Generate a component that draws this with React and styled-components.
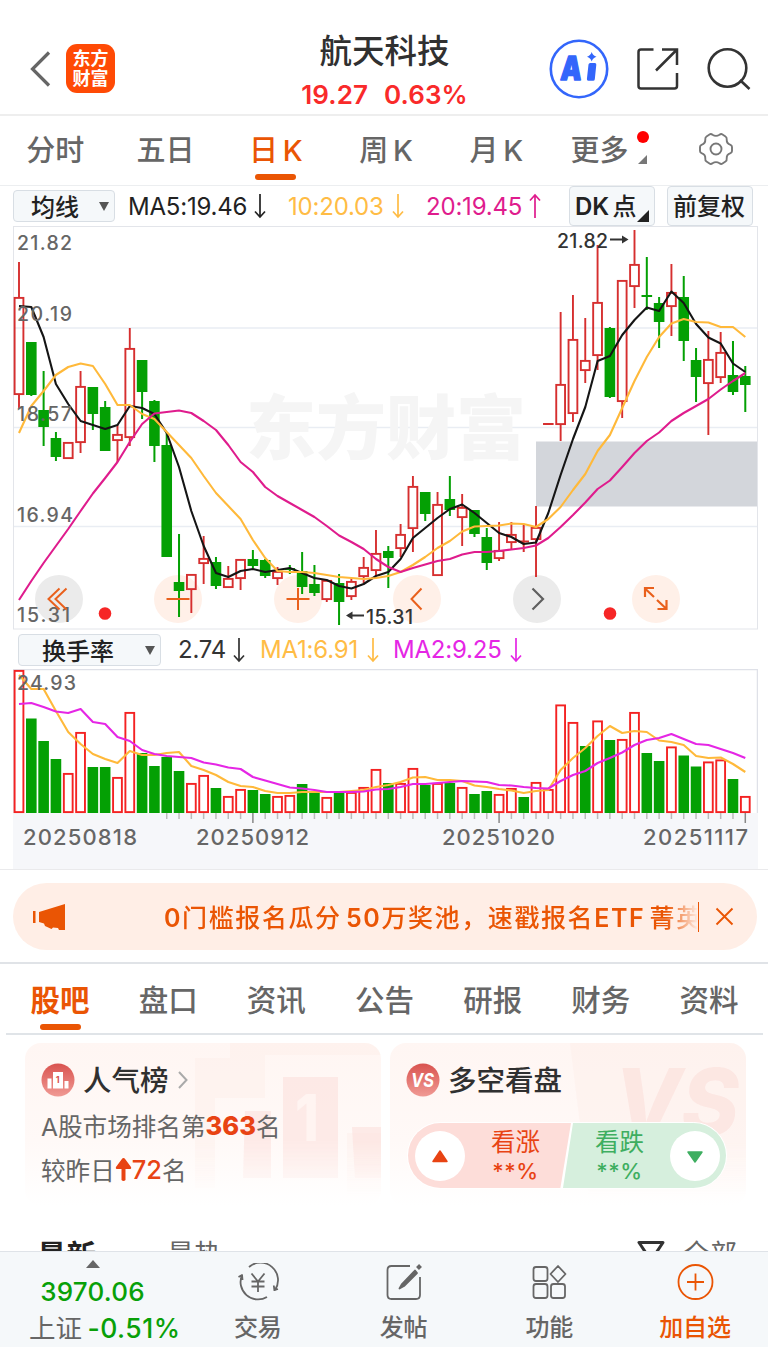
import styled, { createGlobalStyle } from "styled-components";

const UP = "#d62f2f";
const DOWN = "#04a004";
const STEP = 12.31;

// color, high, body top, body bottom, low
const candles = [
  ["r", 262, 297, 395, 408], ["g", 342, 342, 395, 396], ["g", 371, 410, 427, 446], ["g", 432, 438, 457, 461],
  ["r", 442, 442, 459, 459], ["r", 371, 386, 443, 453], ["g", 387, 387, 414, 430], ["g", 401, 407, 451, 451],
  ["r", 425, 434, 441, 462], ["r", 328, 348, 438, 446], ["g", 360, 360, 392, 419], ["g", 400, 401, 446, 462],
  ["g", 432, 445, 557, 557], ["g", 534, 582, 591, 617], ["r", 574, 574, 590, 613], ["r", 536, 558, 564, 584],
  ["g", 557, 562, 586, 589], ["r", 566, 578, 588, 588], ["r", 559, 559, 579, 590], ["g", 550, 559, 566, 568],
  ["g", 559, 560, 576, 578], ["r", 567, 571, 579, 585], ["g", 565, 568, 570, 574], ["g", 552, 571, 587, 594],
  ["g", 565, 584, 593, 596], ["r", 580, 580, 600, 602], ["g", 574, 583, 602, 625], ["r", 578, 581, 597, 600],
  ["r", 557, 567, 577, 583], ["r", 530, 553, 571, 576], ["g", 546, 551, 558, 588], ["r", 524, 534, 549, 557],
  ["r", 476, 486, 529, 552], ["g", 492, 492, 514, 521], ["r", 492, 504, 576, 576], ["g", 476, 499, 510, 516],
  ["r", 494, 507, 518, 546], ["g", 510, 510, 534, 537], ["g", 528, 537, 563, 570], ["r", 522, 550, 559, 561],
  ["r", 522, 534, 543, 549], ["r", 525, 541, 542, 552], ["r", 506, 527, 540, 577], ["r", 424, 424, 424, 424],
  ["r", 312, 384, 425, 441], ["r", 295, 339, 414, 422], ["r", 318, 360, 371, 383], ["r", 245, 302, 356, 370],
  ["g", 327, 328, 397, 398], ["r", 280, 280, 402, 418], ["r", 230, 264, 287, 308], ["g", 257, 295, 297, 310],
  ["g", 297, 303, 322, 348], ["r", 264, 292, 307, 336], ["g", 276, 297, 341, 361], ["g", 348, 360, 377, 402],
  ["r", 331, 359, 384, 435], ["r", 332, 352, 378, 383], ["g", 341, 375, 392, 395], ["g", 366, 376, 385, 412],
];

const ma5 = [306, 307, 337, 384, 404, 421, 425, 429, 425, 406, 408, 414, 433, 467, 511, 546, 573, 577, 571, 569, 572, 570, 568, 573, 578, 580, 586, 588.5, 584, 576, 572, 559, 538, 528, 518, 509, 504.5, 513, 523, 533, 537, 544, 542.5, 513, 475, 439, 407, 361, 356, 335, 320, 307.5, 311, 291.5, 303, 324, 337.5, 343.5, 363.5, 372];
const ma10 = [433, 406, 391, 375, 367, 363.5, 366, 384, 405, 405, 414, 419, 432, 445, 458, 476, 493, 506, 519, 540, 558, 571, 572, 572, 573, 575, 577, 578, 579, 578, 576, 572, 565, 557, 548, 541, 531.5, 526.5, 526, 525.5, 523.5, 524, 527, 519, 507, 490, 474, 451, 435, 408, 381, 357, 337, 323.5, 319, 322, 322.5, 327, 327, 337];
const ma20 = [600, 581, 563, 546, 529, 511, 493.5, 478, 462, 442, 424, 413.5, 412, 410.5, 413, 421, 430, 445, 462, 472, 487, 496, 503, 510, 517, 526, 535.5, 542, 549, 559, 567, 572, 568, 564.5, 561, 559, 554.5, 552, 552, 551, 549.5, 548, 545.5, 538, 527, 515, 502.5, 489, 480.5, 467, 453, 441, 432.5, 421, 413, 406, 399, 389.5, 381, 373];

const volColors = "rgggrrggrrggggrrgrrggrrggrgrrrgrrgrgrggrrgrrrrgrgrrggrggrrgr";
const volumes = [670, 718.5, 741, 759, 773, 732, 767, 767, 777, 712, 753, 766, 757, 771, 783, 775, 788, 796, 789, 790, 794, 796, 795, 784, 793, 797, 793, 792, 787, 769, 783, 783, 768, 785, 783, 783, 787, 794, 791, 794, 788, 797, 782, 789, 704.5, 722, 746, 720.5, 740, 739, 712, 753, 761, 746.5, 755.5, 766.5, 761.5, 759.5, 779, 796];
const vma1 = [675, 689, 689, 711, 732, 744, 754, 759, 763, 751, 755, 755, 753, 752, 766, 770, 775, 782, 786, 787, 791, 793, 793, 792, 792, 792, 792, 791, 790, 787, 785, 782, 777.5, 777, 780, 780, 781, 785.5, 787, 789, 790.5, 793, 791, 790, 770, 758, 748, 736, 726, 733, 731, 732, 740.5, 742, 745, 756, 758, 757.5, 764, 772];
const vma2 = [704, 703, 707, 711.5, 713, 709, 722, 724, 737, 741, 750, 754, 756, 757, 758, 762.5, 764.5, 767.5, 769, 777, 780.5, 784, 787.5, 788.5, 790, 792, 792, 792, 791.5, 789.5, 789, 787, 784, 784, 783, 782, 781, 781.5, 782, 785, 785.5, 787, 788, 788.5, 781, 775, 771, 763, 758, 752.5, 745, 740, 738, 734, 739, 744, 745, 749, 753, 758];

const xAt = (i) => 19 + i * STEP;
const toPoints = (values) => values.map((y, i) => `${xAt(i).toFixed(1)},${y}`).join(" ");
const isDateTick = (i) => [19, 39, 59].includes(i);

const MaLine = ({ values, color }) => (
  <polyline points={toPoints(values)} fill="none" stroke={color} strokeWidth="2.1" strokeLinejoin="round" />
);

const Candle = ({ i, data }) => {
  const [kind, high, top, bottom, low] = data;
  const x = xAt(i);
  if (bottom - top < 3) {
    const color = kind === "r" ? UP : DOWN;
    return (
      <g stroke={color} strokeWidth="2">
        <path d={`M${x} ${high}V${low}M${x - 5.3} ${(top + bottom) / 2}h10.6`} />
      </g>
    );
  }
  if (kind === "g") {
    return (
      <g fill={DOWN}>
        <rect x={x - 1} y={high} width="2" height={low - high} />
        <rect x={x - 5.3} y={top} width="10.6" height={bottom - top} />
      </g>
    );
  }
  return (
    <g stroke={UP} strokeWidth="1.9" fill="none">
      <path d={`M${x} ${high}V${top}M${x} ${bottom}V${low}`} />
      <rect x={x - 4.4} y={top + 0.9} width="8.8" height={bottom - top - 1.8} />
    </g>
  );
};

const PriceChart = () => (
  <Chart viewBox="13 226 745 404" width="745" height="404">
    <rect x="13.5" y="226.5" width="744" height="402.5" fill="#fff" stroke="#e3e5ea" />
    <path d="M14 328H757M14 427.5H757M14 526.5H757" stroke="#e9edf3" strokeWidth="1.3" />
    <Watermark x="246" y="454" textLength="280">东方财富</Watermark>
    <rect x="536" y="441.5" width="221" height="65" fill="#d3d6db" />
    <circle cx="59" cy="599" r="24" fill="#ebebeb" />
    <circle cx="178" cy="599" r="24" fill="#fff0e8" />
    <circle cx="298" cy="599" r="24" fill="#fff0e8" />
    <circle cx="417" cy="599" r="24" fill="#fff0e8" />
    <circle cx="537" cy="599" r="24" fill="#ebebeb" />
    <circle cx="656" cy="599" r="24" fill="#fff0e8" />
    {candles.map((c, i) => (
      <Candle key={i} i={i} data={c} />
    ))}
    <MaLine values={ma5} color="#151515" />
    <MaLine values={ma10} color="#ffb93a" />
    <MaLine values={ma20} color="#df1c8d" />
    <AxisText x="17" y="249.5" textLength="55">21.82</AxisText>
    <AxisText x="17" y="320.5" textLength="55">20.19</AxisText>
    <AxisText x="17" y="421" textLength="55">18.57</AxisText>
    <AxisText x="17" y="521.5" textLength="56">16.94</AxisText>
    <AxisText x="17" y="622" textLength="53">15.31</AxisText>
    <MarkText x="557" y="247.5" textLength="51">21.82</MarkText>
    <path d="M610 239.5h16" stroke="#333" strokeWidth="2" />
    <path d="M622 235.5l6.5 4-6.5 4z" fill="#333" />
    <MarkText x="366" y="623.5" textLength="47">15.31</MarkText>
    <path d="M348 615.5h16" stroke="#333" strokeWidth="2" />
    <path d="M352.5 611.5l-6.5 4 6.5 4z" fill="#333" />
    <g fill="none" stroke="#e9601c" strokeWidth="2">
      <path d="M59.5 588.5l-11 10.5 11 10.5M66.5 588.5l-11 10.5 11 10.5" />
      <path d="M166.5 599h23M286.5 599h23M298 588v22M421.5 588.5l-10 10.5 10 10.5" />
      <path d="M654 588h-9v9M645 588.5l9 8.5M657.5 609h9v-9M666 608.5l-9-8.5" strokeWidth="2.2" />
    </g>
    <path d="M532.5 588.5l10.500 10.5-10.500 10.5" fill="none" stroke="#606060" strokeWidth="2.2" />
    <circle cx="105" cy="613.5" r="6.3" fill="#f62626" />
    <circle cx="610" cy="613.5" r="6.3" fill="#f62626" />
  </Chart>
);

const VolumeChart = () => (
  <Chart viewBox="13 669 745 200" width="745" height="200">
    <rect x="13" y="813" width="745" height="56" fill="#f6f7fa" />
    <path d="M13.5 813V669.5H757.5V813" fill="none" stroke="#dfe1e8" strokeWidth="1.5" />
    {volumes.map((top, i) =>
      volColors[i] === "g" ? (
        <rect key={i} x={xAt(i) - 5.3} y={top} width="10.6" height={813 - top} fill={DOWN} />
      ) : (
        <rect key={i} x={xAt(i) - 4.4} y={top + 0.9} width="8.8" height={811.2 - top} fill="#fff" stroke="#f42222" strokeWidth="1.9" />
      )
    )}
    {volumes.map((_, i) =>
      i < 12 ? null : (
        <path
          key={i}
          d={`M${xAt(i)} 813v${isDateTick(i) ? 10 : 6}`}
          stroke={isDateTick(i) ? "#888" : "#bbb"}
          strokeWidth="1.5"
        />
      )
    )}
    <MaLine values={vma1} color="#ffb93a" />
    <MaLine values={vma2} color="#e526e5" />
    <AxisText x="17" y="690" textLength="59">24.93</AxisText>
    <DateText x="23" y="845" textLength="114">20250818</DateText>
    <DateText x="196" y="845" textLength="113">20250912</DateText>
    <DateText x="442" y="845" textLength="113">20251020</DateText>
    <DateText x="643" y="845" textLength="105">20251117</DateText>
  </Chart>
);

const Arrow = ({ up }) => (
  <svg width="12" height="26" viewBox="0 0 12 26" fill="none" stroke="currentColor" strokeWidth="1.7">
    <path d={up ? "M6 25V2M1 7.5L6 2l5 5.5" : "M6 1v23M1 18.5L6 24l5-5.5"} />
  </svg>
);

const Gear = () => (
  <svg width="36" height="36" viewBox="0 0 36 36" fill="none" stroke="#777" strokeWidth="1.9" strokeLinejoin="round">
    <path d="M11.5 3.5Q13 2.5 14.5 3.8Q18 6 21.5 3.8Q23 2.5 24.5 3.5L27.5 5.5Q29 6.5 28.7 8.5Q28.5 12.5 32.5 13.8Q34 14.5 34 16V20Q34 21.5 32.5 22.2Q28.5 23.5 28.7 27.5Q29 29.5 27.5 30.5L24.5 32.5Q23 33.5 21.5 32.2Q18 30 14.5 32.2Q13 33.5 11.5 32.5L8.5 30.5Q7 29.5 7.3 27.5Q7.5 23.5 3.5 22.2Q2 21.5 2 20V16Q2 14.5 3.5 13.8Q7.5 12.5 7.3 8.5Q7 6.5 8.5 5.5Z" />
    <circle cx="18" cy="18" r="5.5" />
  </svg>
);

const AiIcon = () => (
  <svg width="60" height="60" viewBox="0 0 60 60">
    <circle cx="30" cy="30" r="28.2" fill="#fff" stroke="#3366fb" strokeWidth="2.6" />
    <AiText x="14" y="41.500" fontSize="33" textLength="21" lengthAdjust="spacingAndGlyphs" transform="skewX(-4)">
      A
    </AiText>
    <path d="M39.5 25.5q.2-1.500 1.700-1.500h4.600q1.700 0 1.500 1.700l-1.500 14.500q-.2 1.500-1.700 1.500h-4.800q-1.600 0-1.400-1.700z" fill="#3366fb" />
    <path d="M42.7 13q1.200 3.700 4.800 4.700q-3.600 1-4.800 4.700q-1.200-3.700-4.700-4.700q3.500-1 4.700-4.700z" fill="#3366fb" />
  </svg>
);

const Header = () => (
  <HeaderBar>
    <HeaderLeft>
      <svg width="22" height="36" viewBox="0 0 22 36" fill="none" stroke="#666" strokeWidth="3.2">
        <path d="M20 1.5L3.5 18 20 34.5" />
      </svg>
      <Logo>
        <span>东方</span>
        <span>财富</span>
      </Logo>
    </HeaderLeft>
    <TitleWrap>
      <Title>航天科技</Title>
      <Quote>
        <span>19.27</span>
        <span>0.63%</span>
      </Quote>
    </TitleWrap>
    <HeaderIcons>
      <AiIcon />
      <svg width="42" height="42" viewBox="0 0 42 42" fill="none" stroke="#333" strokeWidth="2.5">
        <path d="M16.5 1.5H4Q1.5 1.5 1.5 4V38Q1.5 40.5 4 40.5H37.5Q40 40.5 40 38V25M25 1.5H40V17M39.5 2L19 22.5" />
      </svg>
      <svg width="44" height="44" viewBox="0 0 44 44" fill="none" stroke="#333" strokeWidth="2.6">
        <circle cx="20.5" cy="21" r="18.8" />
        <path d="M33 33l9.5 9" />
      </svg>
    </HeaderIcons>
  </HeaderBar>
);

const periods = ["分时", "五日", "日 K", "周 K", "月 K"];
const sections = ["股吧", "盘口", "资讯", "公告", "研报", "财务", "资料"];

const RankCard = () => (
  <Card>
    <CardArt width="186" height="163" viewBox="0 0 186 163">
      <path d="M0 15h35V0H186V163H152V90h34V12H70V55H20V145H0z" fill="#fdebe5" opacity=".35" />
      <path d="M88 34h55v101H88zM50 68h26v67H48zM157 84h29v51h-26z" fill="#fbdcd8" opacity=".5" />
      <BigOne x="100" y="98" textLength="24" lengthAdjust="spacingAndGlyphs">1</BigOne>
    </CardArt>
    <CardTitle>
      <svg width="34" height="34" viewBox="0 0 34 34">
        <RedGradient id="rank" />
        <circle cx="17" cy="17" r="16.5" fill="url(#rank)" />
        <path d="M6.5 15.5h4v10h-4zM12 9h10v16.500H12zM23.5 18h4v7.500h-4z" fill="#fff" />
        <TinyOne x="14.7" y="20">1</TinyOne>
      </svg>
      <span>人气榜</span>
      <svg width="12" height="18" viewBox="0 0 12 18" fill="none" stroke="#aaa" strokeWidth="2">
        <path d="M2 1l7.5 8L2 17" />
      </svg>
    </CardTitle>
    <RankLine>
      A股市场排名第<b>363</b>名
    </RankLine>
    <RankLine $last>
      较昨日
      <svg width="17" height="25" viewBox="0 0 17 25" fill="#e84313">
        <path d="M8.5 1q1 0 1.600 1L16 10q.8 2-1.500 2H10.500v11q-2 2-4 0V12H2.500Q.2 12 1 10L6.900 2q.6-1 1.600-1z" />
      </svg>
      <em>72</em>名
    </RankLine>
  </Card>
);

const RedGradient = ({ id }) => (
  <defs>
    <linearGradient id={id} x1="0" y1="0" x2="0" y2="1">
      <stop offset="0" stopColor="#d9534f" />
      <stop offset="1" stopColor="#f09a94" />
    </linearGradient>
  </defs>
);

const VoteCard = () => (
  <Card>
    <CardArt width="176" height="163" viewBox="0 0 176 163">
      <path d="M0 0H176V163H20z" fill="#fdebe5" opacity=".35" />
      <BigVs x="44" y="92" textLength="125" lengthAdjust="spacingAndGlyphs">VS</BigVs>
    </CardArt>
    <CardTitle>
      <svg width="34" height="34" viewBox="0 0 34 34">
        <RedGradient id="versus" />
        <circle cx="17" cy="17" r="16.5" fill="url(#versus)" />
        <SmallVs x="5" y="24" textLength="23" lengthAdjust="spacingAndGlyphs">VS</SmallVs>
      </svg>
      <span>多空看盘</span>
    </CardTitle>
    <Vote>
      <Side $up>
        <Knob>
          <svg width="18" height="16" viewBox="0 0 18 16">
            <path d="M9 3L16 13.5H2z" fill="#e84313" stroke="#e84313" strokeWidth="1.5" strokeLinejoin="round" />
          </svg>
        </Knob>
        <VoteText>
          <span>看涨</span>
          <span>**%</span>
        </VoteText>
      </Side>
      <Side>
        <VoteText>
          <span>看跌</span>
          <span>**%</span>
        </VoteText>
        <Knob>
          <svg width="18" height="16" viewBox="0 0 18 16">
            <path d="M9 14L16 4H2z" fill="#3eae60" stroke="#3eae60" strokeWidth="1.5" strokeLinejoin="round" />
          </svg>
        </Knob>
      </Side>
    </Vote>
  </Card>
);

const NavIcon = ({ name }) => (
  <svg width="42" height="38" viewBox="0 0 42 38" fill="none" stroke="currentColor" strokeWidth="1.8" strokeLinejoin="round">
    {name === "trade" && (
      <>
        <path d="M12 4A17.5 17.5 0 0 1 38 27L41 26M36.800 22.500L37.500 28M30 34A17.5 17.5 0 0 1 5 12L1.500 14M5 11.500L5.500 17" />
        <path d="M14.5 10.5L21 18.5l6.500-8M21 18.500V29M14.500 18.500h13M14.500 23.500h13" />
      </>
    )}
    {name === "post" && (
      <>
        <path d="M27 3H8.500Q4.500 3 4.500 7V32Q4.500 36 8.500 36H33Q37 36 37 32V14" />
        <path d="M37.5 2.5L34.500 5.500" strokeWidth="4" />
        <path d="M32 7.500L19 21 16.500 25.500 21 23 34 10z" fill="currentColor" />
      </>
    )}
    {name === "apps" && (
      <>
        <rect x="5.5" y="4" width="14" height="14" rx="2.5" />
        <rect x="5.5" y="21" width="14" height="14" rx="2.5" />
        <rect x="23" y="21" width="14" height="14" rx="2.5" />
        <path d="M30 3l7.5 8-7.5 8-7.5-8z" />
      </>
    )}
    {name === "add" && (
      <>
        <circle cx="21.5" cy="19" r="17" />
        <path d="M21.5 10.5v17M13 19h17" />
      </>
    )}
  </svg>
);

const App = () => (
  <>
    <GlobalStyle />
    <Screen>
      <Header />
      <PeriodTabs>
        {periods.map((name) => (
          <Period key={name} $active={name === "日 K"}>
            {name}
          </Period>
        ))}
        <Period>
          <More>
            更多
            <RedDot />
            <Corner />
          </More>
        </Period>
        <GearWrap>
          <Gear />
        </GearWrap>
      </PeriodTabs>
      <MaRow>
        <Select $width={102}>
          均线 <Caret />
        </Select>
        <Reading $left={13} $width={138} $color="#222">MA5:19.46 <Arrow /></Reading>
        <Reading $left={22} $width={116} $color="#ffbc45">10:20.03 <Arrow /></Reading>
        <Reading $left={22} $width={115} $color="#df1c8d">20:19.45 <Arrow up /></Reading>
        <Spacer />
        <Toggle>
          <b>DK</b> 点<Corner $dark />
        </Toggle>
        <Toggle>前复权</Toggle>
      </MaRow>
      <PriceChart />
      <VolumeRow>
        <Select $width={143}>
          换手率 <Caret />
        </Select>
        <Reading $left={17} $width={67} $color="#333">2.74 <Arrow /></Reading>
        <Reading $left={15} $width={119} $color="#ffbc45">MA1:6.91 <Arrow /></Reading>
        <Reading $left={14} $width={129} $color="#e526e5">MA2:9.25 <Arrow /></Reading>
      </VolumeRow>
      <VolumeChart />
      <BannerWrap>
        <Banner>
          <svg width="33" height="30" viewBox="0 0 33 30" fill="#ea5504">
            <path d="M0 9h2.5v12H0zM6 10L32 2V28H26L25 26 20 25.5 18.5 27 12 24 11 21.5 6 20z" />
          </svg>
          <BannerText>
            <b>0</b>门槛报名瓜分 <b>50</b>万奖池，速戳报名<b>ETF</b> 菁英
          </BannerText>
          <BannerClose>
            <svg width="19" height="19" viewBox="0 0 19 19" stroke="#ea5504" strokeWidth="1.9">
              <path d="M1.5 1.5l16 16M17.5 1.5l-16 16" />
            </svg>
          </BannerClose>
        </Banner>
      </BannerWrap>
      <SectionTabs>
        {sections.map((name, i) => (
          <Section key={name} $active={i === 0}>
            {name}
          </Section>
        ))}
      </SectionTabs>
      <Cards>
        <RankCard />
        <VoteCard />
      </Cards>
      <FeedTabs>
        <FeedTab $active>最新</FeedTab>
        <FeedTab>最热</FeedTab>
        <Spacer />
        <svg width="28" height="28" viewBox="0 0 28 28" fill="none" stroke="#333" strokeWidth="3" strokeLinejoin="round">
          <path d="M2 4.5H26L17 18V27L11 24V18z" />
        </svg>
        <FeedTab>全部</FeedTab>
      </FeedTabs>
      <BottomBar>
        <IndexBox>
          <svg width="14" height="9" viewBox="0 0 14 9">
            <path d="M7 0L14 8H0z" fill="#666" />
          </svg>
          <IndexValue>3970.06</IndexValue>
          <IndexChange>
            上证 <b>-0.51%</b>
          </IndexChange>
        </IndexBox>
        <NavItem><NavIcon name="trade" />交易</NavItem>
        <NavItem><NavIcon name="post" />发帖</NavItem>
        <NavItem><NavIcon name="apps" />功能</NavItem>
        <NavItem $active><NavIcon name="add" />加自选</NavItem>
      </BottomBar>
    </Screen>
  </>
);

const GlobalStyle = createGlobalStyle`
  body {
    margin: 0;
    background: #fff;
    font-family: Inter, "Noto Sans CJK SC", sans-serif;
  }

  * {
    box-sizing: border-box;
  }

  svg {
    flex-shrink: 0;
  }
`;

const Screen = styled.div`
  display: flex;
  flex-direction: column;
  width: 768px;
  height: 1347px;
  overflow: hidden;
  background: #fff;
`;

const HeaderBar = styled.div`
  display: flex;
  flex-shrink: 0;
  height: 116px;
  border-bottom: 2px solid #eee;
`;

const HeaderLeft = styled.div`
  display: flex;
  align-items: center;
  gap: 15px;
  width: 230px;
  padding: 23px 0 0 29px;
`;

const Logo = styled.div`
  display: flex;
  flex-direction: column;
  align-items: center;
  justify-content: center;
  width: 49px;
  height: 49px;
  border-radius: 11px;
  background: #ff4a05;
  color: #fff;
  font-size: 18px;
  font-weight: 700;
  line-height: 20px;
`;

const TitleWrap = styled.div`
  display: flex;
  flex-direction: column;
  align-items: center;
  width: 309px;
  padding-top: 32px;
`;

const Title = styled.div`
  color: #303030;
  font-size: 32.5px;
  font-weight: 500;
  line-height: 40px;
`;

const Quote = styled.div`
  display: flex;
  gap: 16px;
  color: #f92a2a;
  font-size: 26px;
  font-weight: 600;
  line-height: 46px;
  letter-spacing: 0.1px;
`;

const HeaderIcons = styled.div`
  display: flex;
  align-items: center;
  gap: 28px;
  padding: 24px 0 0 10px;
`;

const AiText = styled.text`
  fill: #3366fb;
  font-weight: 900;
  stroke: #3366fb;
  stroke-width: 1.5px;
  stroke-linejoin: round;
`;

const PeriodTabs = styled.div`
  display: flex;
  flex-shrink: 0;
  height: 70px;
  border-bottom: 1px solid #eceef0;
`;

const Period = styled.div`
  position: relative;
  width: 110.3px;
  color: ${(p) => (p.$active ? "#ea5504" : "#666")};
  font-size: 29px;
  font-weight: 500;
  line-height: 70px;
  text-align: center;
  word-spacing: -3px;

  &::after {
    content: "";
    display: ${(p) => (p.$active ? "block" : "none")};
    position: absolute;
    bottom: 5px;
    left: 34px;
    width: 41px;
    height: 6px;
    border-radius: 3px;
    background: #ea5504;
  }
`;

const More = styled.div`
  position: relative;
  width: 72px;
  margin-left: 19px;
  text-align: left;
`;

const RedDot = styled.i`
  position: absolute;
  top: 15px;
  right: -7px;
  width: 12px;
  height: 12px;
  border-radius: 50%;
  background: #f00;
`;

const Corner = styled.i`
  position: absolute;
  right: ${(p) => (p.$dark ? "5px" : "-5px")};
  bottom: ${(p) => (p.$dark ? "3px" : "22px")};
  width: 0;
  border-bottom: ${(p) => (p.$dark ? "12px solid #222" : "9px solid #777")};
  border-left: ${(p) => (p.$dark ? "12px" : "9px")} solid transparent;
`;

const GearWrap = styled.div`
  display: flex;
  align-items: center;
  padding: 0 0 3px 36px;
`;

const MaRow = styled.div`
  display: flex;
  flex-shrink: 0;
  align-items: center;
  height: 40px;
  padding: 0 15px 0 13px;
`;

const VolumeRow = styled(MaRow)`
  height: 39px;
  padding-left: 18px;
`;

const Select = styled.div`
  display: flex;
  align-items: center;
  justify-content: space-between;
  width: ${(p) => p.$width}px;
  height: 32px;
  padding: 0 5px 1px ${(p) => (p.$width > 120 ? 23 : 17)}px;
  border: 1px solid #d8dee4;
  border-radius: 4px;
  background: #f5f8fa;
  color: #222;
  font-size: 24px;
  font-weight: 500;
`;

const Caret = styled.i`
  margin-top: 2px;
  border-top: 9px solid #555;
  border-left: 5px solid transparent;
  border-right: 5px solid transparent;
`;

const Reading = styled.div`
  display: flex;
  align-items: center;
  justify-content: space-between;
  width: ${(p) => p.$width}px;
  margin-left: ${(p) => p.$left}px;
  color: ${(p) => p.$color};
  font-size: 24px;
  letter-spacing: -0.2px;
  white-space: nowrap;
`;

const Spacer = styled.div`
  flex: 1;
`;

const Toggle = styled.div`
  position: relative;
  width: 86px;
  height: 40px;
  margin-left: 12px;
  padding-left: 5px;
  border: 1px solid #d8dee4;
  border-radius: 4px;
  background: #f5f8fa;
  color: #222;
  font-size: 24px;
  font-weight: 500;
  line-height: 40px;
  white-space: nowrap;
  word-spacing: -3px;

  b {
    font-weight: 600;
  }
`;

const Chart = styled.svg`
  display: block;
  margin-left: 13px;
`;

const Watermark = styled.text`
  fill: #f5f5f5;
  font-size: 70px;
  font-weight: 900;
`;

const AxisText = styled.text`
  fill: #666;
  font-size: 19.5px;
  font-weight: 500;
`;

const MarkText = styled(AxisText)`
  fill: #333;
`;

const DateText = styled.text`
  fill: #666;
  font-size: 22px;
  font-weight: 500;
`;

const BannerWrap = styled.div`
  flex-shrink: 0;
  height: 95px;
  padding: 13px 11px 0 13px;
  border-top: 1px solid #eaeaec;
  border-bottom: 2px solid #e0e3e7;
`;

const Banner = styled.div`
  display: flex;
  align-items: center;
  height: 67px;
  padding-left: 20px;
  border-radius: 34px;
  background: #ffeee6;
`;

const BannerText = styled.div`
  width: 534px;
  margin-left: 98px;
  padding-bottom: 2px;
  overflow: hidden;
  color: #ea5504;
  font-size: 25px;
  font-weight: 500;
  letter-spacing: 1.6px;
  white-space: nowrap;
  word-spacing: -4px;
  mask-image: linear-gradient(to right, #000 94%, transparent 100%);

  b {
    font-weight: 600;
  }
`;

const BannerClose = styled.div`
  display: flex;
  align-items: center;
  height: 30px;
  padding-left: 16px;
  border-left: 1.5px solid #ea5504;
`;

const SectionTabs = styled.div`
  display: flex;
  flex-shrink: 0;
  height: 71px;
  margin: 0 5px 0 6px;
  border-bottom: 2px solid #e0e4e8;
`;

const Section = styled.div`
  position: relative;
  width: 108.2px;
  color: ${(p) => (p.$active ? "#ea5504" : "#666")};
  font-size: 29.5px;
  font-weight: ${(p) => (p.$active ? 700 : 500)};
  line-height: 73px;
  text-align: center;

  &::after {
    content: "";
    display: ${(p) => (p.$active ? "block" : "none")};
    position: absolute;
    bottom: 3px;
    left: 34px;
    width: 41px;
    height: 6px;
    border-radius: 3px;
    background: #ea5504;
  }
`;

const Cards = styled.div`
  display: flex;
  flex-shrink: 0;
  gap: 9px;
  height: 163px;
  margin: 8px 22px 0 25px;
`;

const Card = styled.div`
  position: relative;
  width: 356px;
  padding: 20px 16px 0;
  overflow: hidden;
  border-radius: 16px;
  background: linear-gradient(#fff6f3, #fff9f7 60%, #fff);
`;

const CardArt = styled.svg`
  position: absolute;
  top: 0;
  right: 0;
  mask-image: linear-gradient(#000 60%, transparent 95%);
`;

const CardTitle = styled.div`
  position: relative;
  display: flex;
  align-items: center;
  gap: 8px;
  height: 34px;
  color: #303030;
  font-size: 28.5px;
  font-weight: 500;

  span {
    padding-bottom: 4px;
  }
`;

const RankLine = styled.div`
  position: relative;
  display: flex;
  align-items: center;
  height: 44px;
  margin-top: ${(p) => (p.$last ? 0 : 6)}px;
  color: #666;
  font-size: 24.6px;

  b,
  em {
    color: #e84313;
    font-size: 25.5px;
    font-style: normal;
    font-weight: 800;
  }

  em {
    font-weight: 500;
  }
`;

const BigOne = styled.text`
  fill: #fff4f1;
  font-size: 64px;
  font-weight: 800;
`;

const TinyOne = styled.text`
  fill: #d9534f;
  font-size: 9px;
  font-weight: 700;
`;

const BigVs = styled.text`
  fill: #fbdcd8;
  opacity: 0.55;
  font-size: 92px;
  font-style: italic;
  font-weight: 800;
`;

const SmallVs = styled.text`
  fill: #fff;
  font-size: 19px;
  font-style: italic;
  font-weight: 700;
`;

const Vote = styled.div`
  position: relative;
  display: flex;
  width: 320px;
  height: 67px;
  margin-top: 25px;
  margin-left: 1px;
  overflow: hidden;
  border: 1px solid #fff;
  border-radius: 34px;
  background: #fff;
`;

const Side = styled.div`
  display: flex;
  align-items: center;
  justify-content: space-between;
  width: ${(p) => (p.$up ? "163px" : "164px")};
  flex-shrink: 0;
  margin-left: ${(p) => (p.$up ? 0 : -8)}px;
  padding: ${(p) => (p.$up ? "0 31px 0 7px" : "0 7px 0 32px")};
  background: ${(p) => (p.$up ? "#fdddd9" : "#d6efdd")};
  color: ${(p) => (p.$up ? "#e84313" : "#3eae60")};
  clip-path: ${(p) =>
    p.$up ? "polygon(0 0, 100% 0, 93.5% 100%, 0 100%)" : "polygon(10px 0, 100% 0, 100% 100%, 0 100%)"};
`;

const Knob = styled.div`
  display: flex;
  align-items: center;
  justify-content: center;
  width: 50px;
  height: 50px;
  border-radius: 50%;
  background: #fff;
`;

const VoteText = styled.div`
  display: flex;
  flex-direction: column;
  align-items: center;
  padding-top: 2px;
  font-size: 24.5px;
  line-height: 29px;

  span:last-child {
    font-size: 22px;
    font-weight: 500;
    letter-spacing: 0.5px;
    line-height: 29px;
  }
`;

const FeedTabs = styled.div`
  display: flex;
  flex-shrink: 0;
  align-items: flex-start;
  gap: 18px;
  height: 45px;
  padding: 32px 31px 0 37px;
  overflow: hidden;
`;

const FeedTab = styled.div`
  margin-right: ${(p) => (p.$active ? 53 : 0)}px;
  color: ${(p) => (p.$active ? "#222" : "#666")};
  font-size: ${(p) => (p.$active ? 29.5 : 27)}px;
  font-weight: ${(p) => (p.$active ? 700 : 400)};
  line-height: 34px;
`;

const BottomBar = styled.div`
  display: flex;
  flex-shrink: 0;
  height: 96px;
  border-top: 1.5px solid #dfe3e8;
  background: #f5f8fa;
`;

const IndexBox = styled.div`
  display: flex;
  flex-direction: column;
  align-items: center;
  flex-shrink: 0;
  width: 185px;
  padding-top: 8px;
`;

const IndexValue = styled.div`
  margin-top: 4px;
  color: #08a008;
  font-size: 26px;
  font-weight: 500;
  letter-spacing: 0.2px;
  line-height: 38px;
`;

const IndexChange = styled.div`
  align-self: flex-start;
  margin-left: 29px;
  color: #666;
  font-size: 26.5px;
  line-height: 34px;
  white-space: nowrap;

  b {
    margin-left: -2px;
    color: #08a008;
    font-weight: 500;
    letter-spacing: 0.5px;
  }
`;

const NavItem = styled.div`
  display: flex;
  flex-direction: column;
  align-items: center;
  width: 146.5px;
  padding-top: 11px;
  color: ${(p) => (p.$active ? "#ea5504" : "#666")};
  font-size: 24px;
  font-weight: 500;
  line-height: 54px;
`;

export default App;
